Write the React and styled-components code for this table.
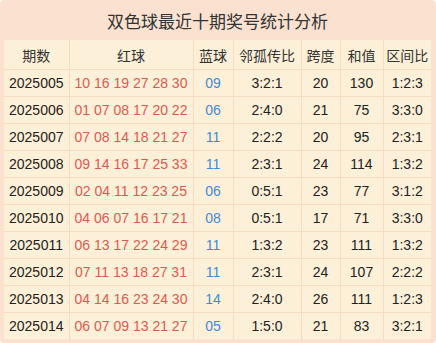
import React from 'react'
import styled, { createGlobalStyle } from 'styled-components'

const GlobalStyle = createGlobalStyle`
  html, body { margin: 0; padding: 0; background: #ffffff; }
  body { font-family: "Liberation Sans", "Noto Sans CJK SC", sans-serif; }
`

// 近十期开奖数据
const rows = [
  ['2025005', '10 16 19 27 28 30', '09', '3:2:1', 20, 130, '1:2:3'],
  ['2025006', '01 07 08 17 20 22', '06', '2:4:0', 21, 75, '3:3:0'],
  ['2025007', '07 08 14 18 21 27', '11', '2:2:2', 20, 95, '2:3:1'],
  ['2025008', '09 14 16 17 25 33', '11', '2:3:1', 24, 114, '1:3:2'],
  ['2025009', '02 04 11 12 23 25', '06', '0:5:1', 23, 77, '3:1:2'],
  ['2025010', '04 06 07 16 17 21', '08', '0:5:1', 17, 71, '3:3:0'],
  ['2025011', '06 13 17 22 24 29', '11', '1:3:2', 23, 111, '1:3:2'],
  ['2025012', '07 11 13 18 27 31', '11', '2:3:1', 24, 107, '2:2:2'],
  ['2025013', '04 14 16 23 24 30', '14', '2:4:0', 26, 111, '1:2:3'],
  ['2025014', '06 07 09 13 21 27', '05', '1:5:0', 21, 83, '3:2:1'],
]

const widths = [65, 124, 40, 68, 39, 43, 48]
const headers = ['期数', '红球', '蓝球', '邻孤传比', '跨度', '和值', '区间比']

const Frame = styled.div`
  width: 436px;
  height: 343px;
  box-sizing: border-box;
  background: #fbe2d0;
  border-radius: 4px;
  padding: 0 5px 4px 4px;
  display: flex;
  flex-direction: column;
`

const Title = styled.div`
  height: 40px;
  display: flex;
  align-items: center;
  justify-content: center;
  font-size: 17px;
  color: #333333;
  font-family: "Noto Sans CJK SC", sans-serif;
`

const Table = styled.table`
  border-collapse: collapse;
  table-layout: fixed;
  width: 427px;
  background: #fdf0d8;
`

const Th = styled.th`
  height: 29px;
  padding: 0;
  font-weight: normal;
  font-size: 14px;
  color: #333333;
  font-family: "Noto Sans CJK SC", sans-serif;
  border: 1px solid #f7dcc2;
  border-top: none;
  &:first-child { border-left: none; }
  &:last-child { border-right: none; }
`

const Td = styled.td`
  height: 26px;
  padding: 0;
  text-align: center;
  font-size: 14px;
  color: ${p => (p.$tone === 'red' ? '#dd5a52' : p.$tone === 'blue' ? '#3f8ad8' : '#222222')};
  border: 1px solid #f7dcc2;
  white-space: nowrap;
  &:first-child { border-left: none; }
  &:last-child { border-right: none; }
`

const Tr = styled.tr`
  &:last-child td { border-bottom: none; }
`

export default function App() {
  return (
    <Frame>
      <GlobalStyle />
      <Title>双色球最近十期奖号统计分析</Title>
      <Table>
        <colgroup>
          {widths.map((w, i) => <col key={i} style={{ width: w }} />)}
        </colgroup>
        <thead>
          <tr>
            {headers.map(h => <Th key={h}>{h}</Th>)}
          </tr>
        </thead>
        <tbody>
          {rows.map(r => (
            <Tr key={r[0]}>
              <Td>{r[0]}</Td>
              <Td $tone="red">{r[1]}</Td>
              <Td $tone="blue">{r[2]}</Td>
              <Td>{r[3]}</Td>
              <Td>{r[4]}</Td>
              <Td>{r[5]}</Td>
              <Td>{r[6]}</Td>
            </Tr>
          ))}
        </tbody>
      </Table>
    </Frame>
  )
}
